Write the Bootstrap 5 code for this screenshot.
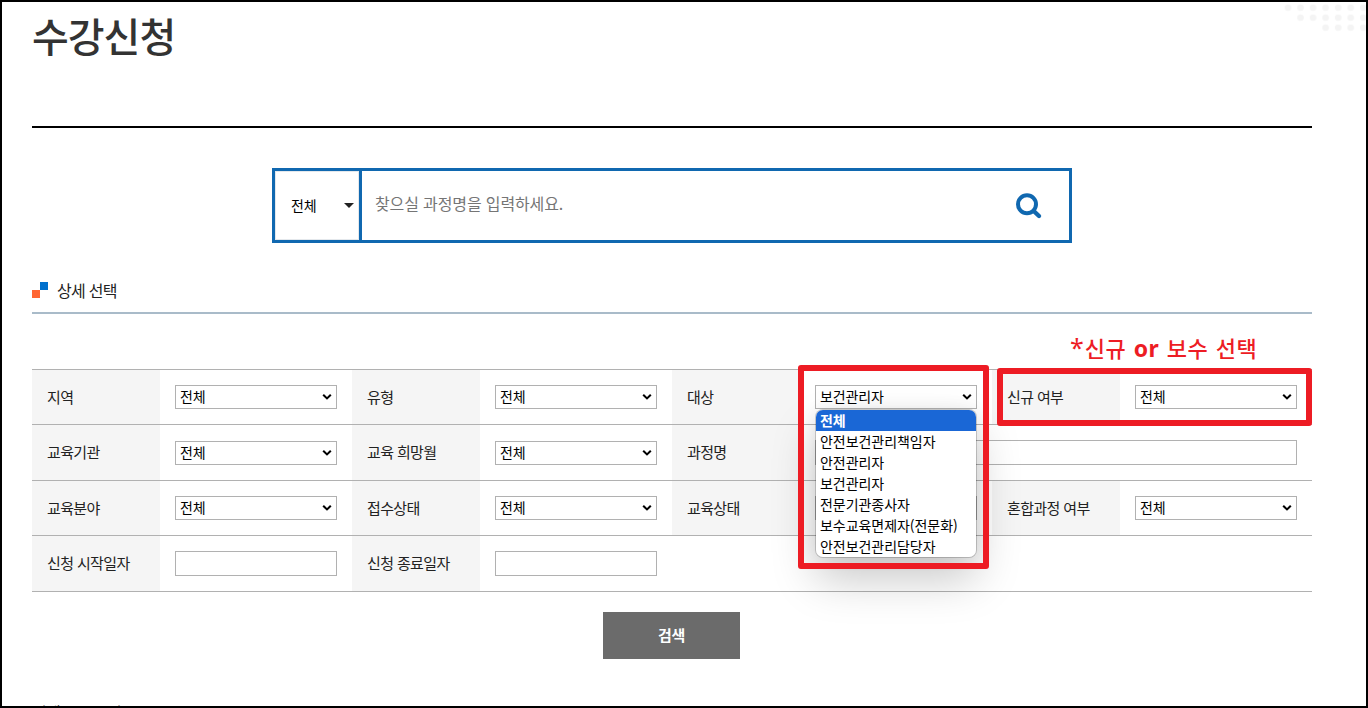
<!DOCTYPE html>
<html lang="ko">
<head>
<meta charset="utf-8">
<title>수강신청</title>
<link href="https://cdn.jsdelivr.net/npm/bootstrap@5.3.0/dist/css/bootstrap.min.css" rel="stylesheet">
<style>
body{font-family:"Noto Sans CJK KR",sans-serif;font-size:15px;letter-spacing:-.62px;color:#222;background:#fff}
.page-frame{width:1368px;height:708px;border:2px solid #000;padding:0 54px 0 30px}
.page-title{font-size:40px;font-weight:500;letter-spacing:-1px;color:#333;line-height:60px;height:126px;padding-top:3px;border-bottom:2px solid #000}
.dots{top:0;right:0}
.search-box{width:800px;height:75px;border:3px solid #1068b0;margin-top:40px}
.kind{width:87px;border-right:3px solid #1068b0;padding:0 5px 0 16px;font-size:14px;letter-spacing:-.2px;color:#000;box-shadow:inset 0 0 0 1px #e4e8ec}
.kind i{border:5px solid transparent;border-top-color:#222;border-bottom:0}
.keyword{border:0;padding:0 0 6px 13px;font-size:16px;letter-spacing:-.13px;outline:0}
.keyword::placeholder{color:#757575;opacity:1}
.section-title{height:71px;font-size:16px;letter-spacing:-.75px;border-bottom:2px solid #a9bbc9}
.section-title svg{margin-top:24px}
.section-title span{line-height:48px;margin-top:23px}
.filters{margin-top:55px;border-top:1px solid #b1b1b1}
.filter-row{height:56px;border-bottom:1px solid #b1b1b1}
.filter-row:nth-child(odd){height:55px}
.cell{width:320px}
.cell-wide{width:640px}
.cell-label{width:128px;background:#f5f5f5;padding-left:15px}
.cell-value{padding:0 15px}
.cell select,.cell-value input{width:100%;height:24px;border:1px solid #b1b1b1;border-radius:0;background:#fff;color:#000;font:14px "Noto Sans CJK KR",sans-serif;letter-spacing:-.1px;padding:0;outline:0}
.cell select{appearance:none;padding:0 20px 2px 4px;line-height:20px;background:#fff url("data:image/svg+xml,%3Csvg xmlns='http://www.w3.org/2000/svg' width='10' height='8'%3E%3Cpath d='M1.2 1.8L5 5.4 8.8 1.8' fill='none' stroke='%23000' stroke-width='2.1'/%3E%3C/svg%3E") no-repeat right 4px top 7px}
.cell-value input{height:25px}
.filter-row:nth-child(2) select{margin-top:1px}
.options{left:144px;top:40px;width:160px;height:147px;z-index:5;font-size:14px;letter-spacing:-.05px;color:#000;line-height:20px;background:#fff;border-radius:7px;overflow:hidden;box-shadow:0 0 0 1px rgba(0,0,0,.18)}
.options li{height:21px;padding-left:4px}
.options li:first-child{background:#1a67d6;color:#fff;font-weight:700;line-height:20px}
.options-shadow{left:144px;top:40px;width:160px;height:147px;z-index:3;border-radius:7px;box-shadow:0 22px 45px rgba(0,0,0,.22),0 0 18px rgba(0,0,0,.07)}
.mark-frame{border:6px solid #ed1c24;border-radius:3px;z-index:6;pointer-events:none}
.mark-target{left:126px;top:-5px;width:191px;height:204px}
.mark-new{left:5px;top:-2px;width:315px;height:58px}
.mark-note{left:78px;top:-41px;color:#ed1c24;font-size:22px;font-weight:500;letter-spacing:.5px;word-spacing:.8px;line-height:36px}
.mark-note b,.mark-note i{font-family:"Noto Sans",sans-serif;font-size:23px}
.mark-note i{font-style:normal;font-size:25px;font-weight:400;line-height:1;margin-right:.5px}
.submit-btn{width:137px;height:47px;margin:20px 0 0 571px;border:0;border-radius:0;background:#6b6b6b;color:#fff;font-size:15px;font-weight:700;letter-spacing:-.3px}
.total{margin-top:41px;font-size:16px;line-height:24px;word-spacing:3px}
</style>
</head>
<body>
<main class="page-frame position-relative overflow-hidden">
  <svg class="dots position-absolute" width="84" height="34" fill="#f4f4f4"><defs><pattern id="d" x="2.7" y="0.7" width="12.55" height="10" patternUnits="userSpaceOnUse"><circle cx="3.3" cy="5" r="3.3"/></pattern></defs><path fill="url(#d)" d="M2 0H84V31H40V21H15V11H2z"/></svg>
  <h1 class="page-title mb-0">수강신청</h1>
  <form class="search-box d-flex mx-auto">
    <div class="kind d-flex align-items-center justify-content-between flex-shrink-0"><span>전체</span><i></i></div>
    <input class="keyword flex-grow-1" placeholder="찾으실 과정명을 입력하세요.">
    <svg class="flex-shrink-0 align-self-center" width="54" height="32" fill="none" stroke="#1068b0"><circle cx="12" cy="14.3" r="9" stroke-width="4"/><path d="M18.7 21l5.3 5" stroke-width="4.4" stroke-linecap="round"/></svg>
  </form>
  <h2 class="section-title d-flex mb-0 fw-normal"><svg class="me-2 flex-shrink-0" width="17" height="32"><path fill="#0070cd" d="M8 15h8v8H8z"/><path fill="#ff6633" d="M0 23h8v8H0z"/></svg><span>상세 선택</span></h2>
  <section class="filters">
    <div class="filter-row d-flex">
      <div class="cell d-flex"><label class="cell-label d-flex align-items-center">지역</label><div class="cell-value flex-fill d-flex align-items-center"><select><option>전체</option></select></div></div>
      <div class="cell d-flex"><label class="cell-label d-flex align-items-center">유형</label><div class="cell-value flex-fill d-flex align-items-center"><select><option>전체</option></select></div></div>
      <div class="cell d-flex position-relative"><label class="cell-label d-flex align-items-center">대상</label><div class="cell-value flex-fill d-flex align-items-center"><select><option>보건관리자</option></select></div>
        <div class="options-shadow position-absolute"></div>
        <ul class="options position-absolute list-unstyled mb-0"><li>전체</li><li>안전보건관리책임자</li><li>안전관리자</li><li>보건관리자</li><li>전문기관종사자</li><li>보수교육면제자(전문화)</li><li>안전보건관리담당자</li></ul>
        <div class="mark-frame mark-target position-absolute"></div>
      </div>
      <div class="cell d-flex position-relative"><label class="cell-label d-flex align-items-center">신규 여부</label><div class="cell-value flex-fill d-flex align-items-center"><select><option>전체</option></select></div>
        <div class="mark-note position-absolute text-nowrap"><i>*</i>신규 <b>or</b> 보수 선택</div>
        <div class="mark-frame mark-new position-absolute"></div>
      </div>
    </div>
    <div class="filter-row d-flex">
      <div class="cell d-flex"><label class="cell-label d-flex align-items-center">교육기관</label><div class="cell-value flex-fill d-flex align-items-center"><select><option>전체</option></select></div></div>
      <div class="cell d-flex"><label class="cell-label d-flex align-items-center">교육 희망월</label><div class="cell-value flex-fill d-flex align-items-center"><select><option>전체</option></select></div></div>
      <div class="cell-wide d-flex"><label class="cell-label d-flex align-items-center">과정명</label><div class="cell-value flex-fill d-flex align-items-center"><input></div></div>
    </div>
    <div class="filter-row d-flex">
      <div class="cell d-flex"><label class="cell-label d-flex align-items-center">교육분야</label><div class="cell-value flex-fill d-flex align-items-center"><select><option>전체</option></select></div></div>
      <div class="cell d-flex"><label class="cell-label d-flex align-items-center">접수상태</label><div class="cell-value flex-fill d-flex align-items-center"><select><option>전체</option></select></div></div>
      <div class="cell d-flex"><label class="cell-label d-flex align-items-center">교육상태</label><div class="cell-value flex-fill d-flex align-items-center"><select><option></option></select></div></div>
      <div class="cell d-flex"><label class="cell-label d-flex align-items-center">혼합과정 여부</label><div class="cell-value flex-fill d-flex align-items-center"><select><option>전체</option></select></div></div>
    </div>
    <div class="filter-row d-flex">
      <div class="cell d-flex"><label class="cell-label d-flex align-items-center">신청 시작일자</label><div class="cell-value flex-fill d-flex align-items-center"><input></div></div>
      <div class="cell d-flex"><label class="cell-label d-flex align-items-center">신청 종료일자</label><div class="cell-value flex-fill d-flex align-items-center"><input></div></div>
    </div>
  </section>
  <button class="submit-btn btn d-block">검색</button>
  <p class="total mb-0">전체 0000 건</p>
</main>
<script src="https://cdn.jsdelivr.net/npm/bootstrap@5.3.0/dist/js/bootstrap.bundle.min.js"></script>
</body>
</html>
